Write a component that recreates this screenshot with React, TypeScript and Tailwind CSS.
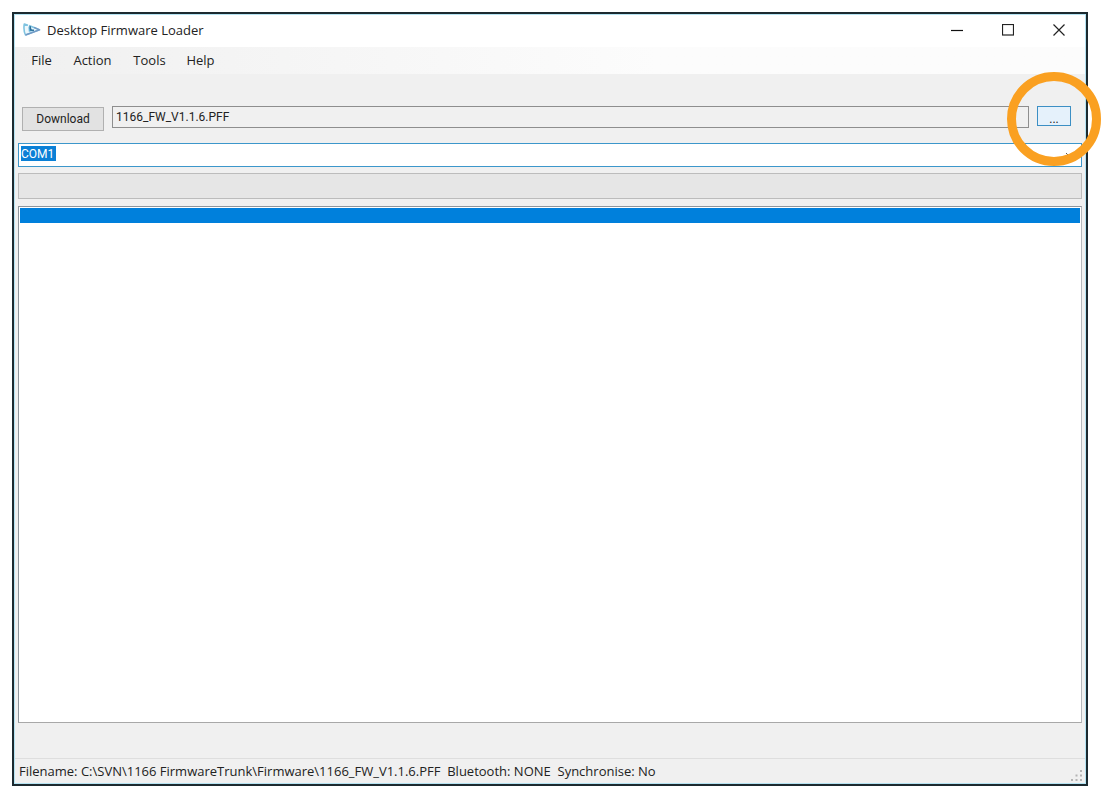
import React from "react";

const menus = [
  { label: "File", width: "w-[41px]" },
  { label: "Action", width: "w-[61px]" },
  { label: "Tools", width: "w-[53px]" },
  { label: "Help", width: "w-[49px]" },
];

function AppIcon() {
  return (
    <svg width="18" height="14" viewBox="0 0 18 14" fill="none" aria-hidden="true">
      <path d="M5 2.2L1.3 1C0.8 4 1 9 2.5 12L16.5 6.8L6 2.4" fill="#eef8fc" stroke="#7fc3e0" strokeWidth="1.6" strokeLinejoin="round" />
      <path d="M2.5 12L16.5 6.8L11 4.3" stroke="#7398c4" strokeWidth="1.4" strokeLinejoin="round" />
      <path d="M5.5 3.5L5.8 8.8L10.5 8Z" fill="#5fb1d8" />
      <path d="M7 3.2L7.8 7L11 7.2" stroke="#2d6f9b" strokeWidth="1.5" />
    </svg>
  );
}

function TitleBar() {
  return (
    <header className="flex h-8 items-center bg-white pr-px pb-[3px] pl-2">
      <AppIcon />
      <h1 className="flex-1 pl-[6px] text-[13px] leading-4 text-[#222]">Desktop Firmware Loader</h1>
      <button type="button" aria-label="Minimize" className="flex h-7 w-[51px] items-center justify-center">
        <svg width="12" height="12" viewBox="0 0 12 12" stroke="#111" aria-hidden="true">
          <path d="M0 6.5H12" strokeWidth="1.2" />
        </svg>
      </button>
      <button type="button" aria-label="Maximize" className="flex h-7 w-[51px] items-center justify-center">
        <svg width="12" height="12" viewBox="0 0 12 12" fill="none" stroke="#222" aria-hidden="true">
          <rect x="0.5" y="0.5" width="11" height="10.5" strokeWidth="1.2" />
        </svg>
      </button>
      <button type="button" aria-label="Close" className="flex h-7 w-[51px] items-center justify-center">
        <svg width="12" height="12" viewBox="0 0 12 12" stroke="#222" aria-hidden="true">
          <path d="M0.5 0.5L11.5 11.5M11.5 0.5L0.5 11.5" strokeWidth="1.2" />
        </svg>
      </button>
    </header>
  );
}

function ResizeGrip() {
  return (
    <svg width="12" height="12" viewBox="0 0 12 12" fill="#b4b4b4" aria-hidden="true">
      <path d="M9 0h2v2H9zM9 4.5h2v2H9zM4.5 4.5h2v2h-2zM9 9h2v2H9zM4.5 9h2v2h-2zM0 9h2v2H0z" />
    </svg>
  );
}

export default function App() {
  return (
    <div className="flex min-h-screen bg-white pt-3 pr-[18px] pb-3 pl-3 font-['Open_Sans','Noto_Sans',sans-serif] text-[#222]">
      <div className="flex min-w-0 flex-1 flex-col border-2 border-[#1c2a30]">
        <div className="flex flex-1 flex-col border border-[#b5e3f2] bg-[#f0f0f0]">
          <TitleBar />
          <nav className="flex h-[27px] items-center bg-linear-to-r from-[#f0f0f0] to-[#fcfcfc] to-60% pb-[2px] pl-[6px]">
            {menus.map((menu) => (
              <button key={menu.label} type="button" className={`${menu.width} text-center text-[13px] leading-4`}>
                {menu.label}
              </button>
            ))}
          </nav>

          <main className="flex flex-1 flex-col px-[3px] pt-8 pb-[35px] font-[Roboto,'Liberation_Sans',sans-serif] text-[12px]">
            <div className="flex h-[25px] items-start pr-[11px] pl-1">
              <button
                type="button"
                className="mt-px h-6 w-[82px] border border-[#b0b0b0] bg-[#e2e2e2] text-center leading-[22px]"
              >
                Download
              </button>
              <input
                type="text"
                readOnly
                aria-label="Firmware file"
                defaultValue="1166_FW_V1.1.6.PFF"
                className="ml-2 h-[22px] min-w-0 flex-1 border border-[#8e8e8e] bg-[#f0f0f0] px-[3px] leading-5 outline-none"
              />
              <div className="relative ml-2 h-5 w-[34px]">
                <button
                  type="button"
                  aria-label="Browse"
                  className="block h-5 w-full border border-[#3c8fc4] bg-[#e5f1fb] pt-1 text-center leading-4"
                >
                  ...
                </button>
                <div className="pointer-events-none absolute -top-[34px] -left-[30px] z-10 size-[94px] rounded-full border-[9px] border-[#faa021]" />
              </div>
            </div>

            <div className="relative mt-3">
              <select
                aria-label="Port"
                className="block h-6 w-full appearance-none border border-[#3c97cb] bg-white bg-[linear-gradient(#0a80d6,#0a80d6)] bg-[length:35px_15px] bg-[position:2px_2px] bg-no-repeat pb-[2px] pl-[2px] text-white outline-none"
              >
                <option className="text-black">COM1</option>
              </select>
              <svg className="pointer-events-none absolute top-[9px] right-2" width="9" height="6" viewBox="0 0 9 6" fill="none" stroke="#555" aria-hidden="true">
                <path d="M1 1L4.5 4.5L8 1" />
              </svg>
            </div>

            <div
              role="progressbar"
              aria-label="Download progress"
              aria-valuenow={0}
              className="mt-[6px] h-[26px] border border-[#bcbcbc] bg-[#e6e6e6]"
            />

            <ul role="listbox" aria-label="Log" className="mt-[7px] flex-1 border border-[#8e959c] border-r-[#b4b8bc] border-b-[#a8a8a8] bg-white p-px">
              <li role="option" aria-selected="true" className="h-[15px] bg-[#0080dc]" />
            </ul>
          </main>

          <footer className="flex h-[25px] items-center border-t border-[#dedede] pl-1 text-[13px] leading-4">
            <p className="flex-1 whitespace-pre">
              {"Filename: C:\\SVN\\1166 FirmwareTrunk\\Firmware\\1166_FW_V1.1.6.PFF  Bluetooth: NONE  Synchronise: No"}
            </p>
            <span className="self-end pr-[2px] pb-px">
              <ResizeGrip />
            </span>
          </footer>
        </div>
      </div>
    </div>
  );
}
